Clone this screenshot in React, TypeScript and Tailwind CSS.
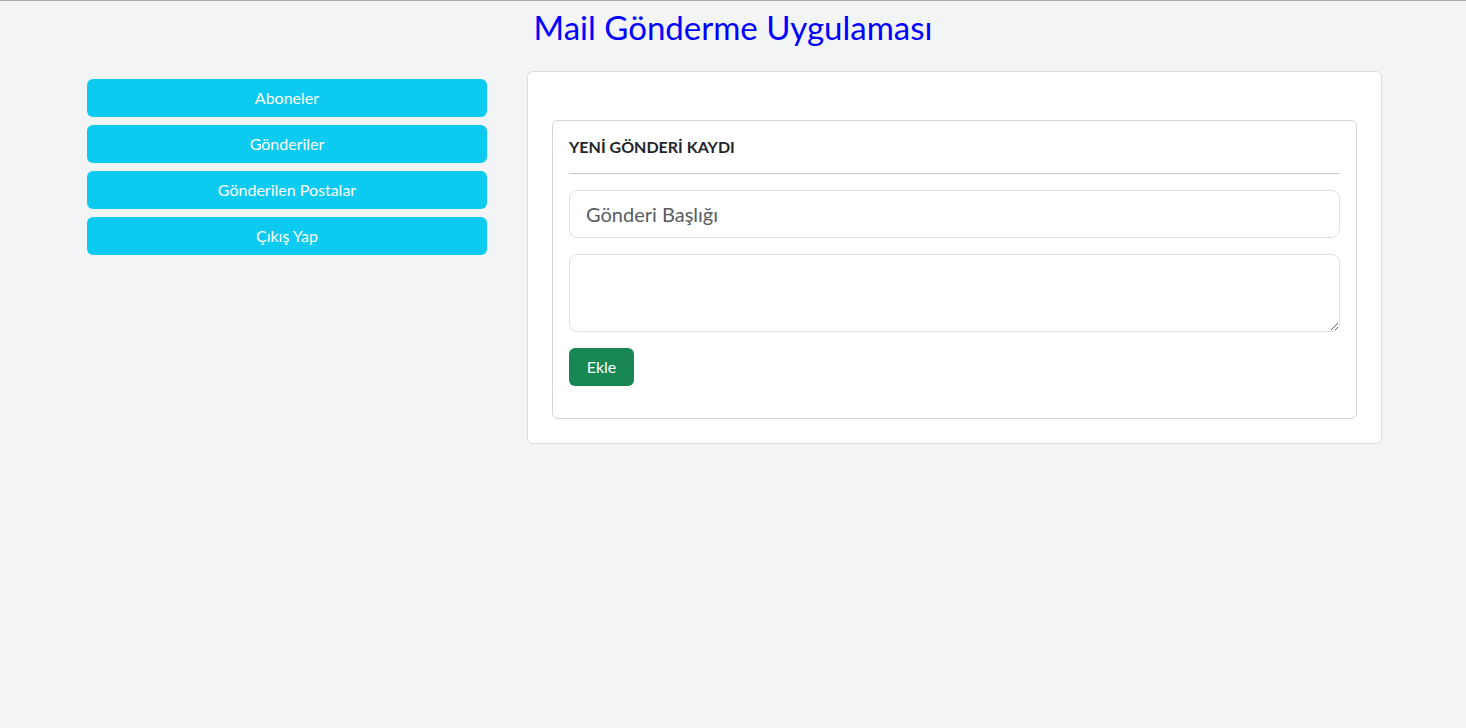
const menu = ["Aboneler", "Gönderiler", "Gönderilen Postalar", "Çıkış Yap"];

export default function App() {
  return (
    <div
      className="min-h-[728px] bg-[#f3f4f6] border-t border-[#a9a9a9] text-[#212529]"
      style={{ fontFamily: "Lato, 'Noto Sans', sans-serif" }}
    >
      <h2 className="text-center text-[33px] leading-[38px] text-[#0000ff] pt-[7px]">
        Mail Gönderme Uygulaması
      </h2>

      <div className="flex gap-10 pl-[87px] mt-[25px]">
        <div className="w-[400px] flex flex-col gap-2 pt-2">
          {menu.map((item) => (
            <button
              key={item}
              className="h-[38px] w-full rounded-md bg-[#0dcaf0] text-white text-base"
            >
              {item}
            </button>
          ))}
        </div>

        <div className="w-[855px] bg-white border border-[#dcdcdc] rounded-md px-6 pt-12 pb-6">
          <div className="border border-[#d3d3d3] rounded-md p-4">
            <h5 className="text-[16px] leading-5 font-bold uppercase">
              YENİ GÖNDERİ KAYDI
            </h5>
            <hr className="my-4 border-t border-[#c8c8c8]" />
            <form className="flex flex-col gap-4 pb-4">
              <input
                placeholder="Gönderi Başlığı"
                className="h-12 w-full rounded-lg border border-[#dee2e6] px-4 text-xl placeholder:text-[#595c5f] outline-none"
              />
              <textarea className="h-[78px] w-full rounded-lg border border-[#dee2e6] px-3 py-2 outline-none" />
              <div>
                <button
                  type="button"
                  className="h-[38px] w-[65px] rounded-md bg-[#198754] text-white text-base"
                >
                  Ekle
                </button>
              </div>
            </form>
          </div>
        </div>
      </div>
    </div>
  );
}
